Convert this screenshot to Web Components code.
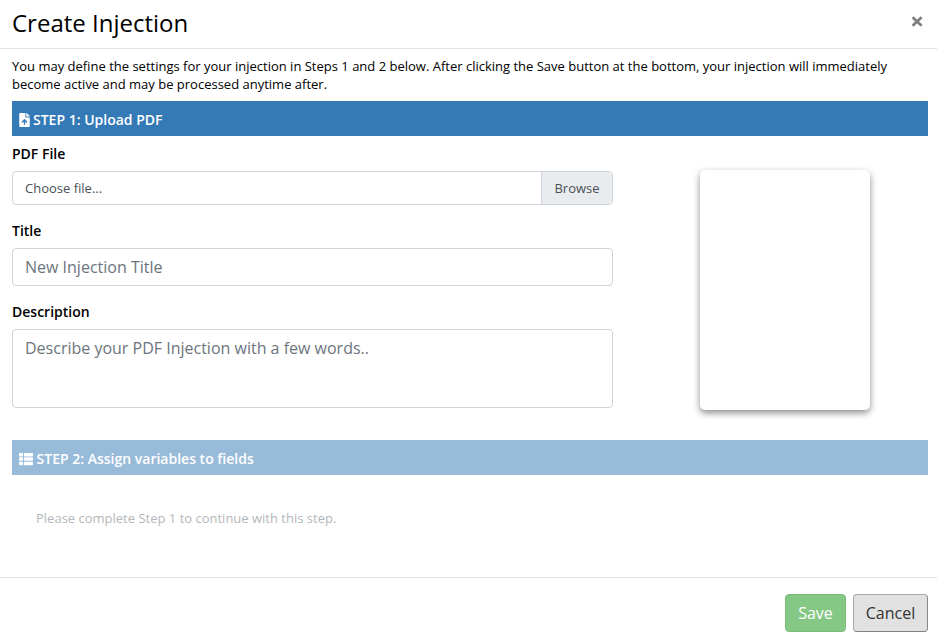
<!DOCTYPE html>
<html lang="en">
<head>
<meta charset="utf-8">
<title>Create Injection</title>
<style>
html,body{margin:0;height:100%;background:#fff;overflow:hidden}
body{font-family:"Open Sans","Noto Sans",sans-serif;color:#000}
</style>
</head>
<body>
<injection-dialog></injection-dialog>

<template id="t-dialog">
<style>
:host{display:flex;flex-direction:column;height:644px;width:937px;box-sizing:border-box}
header{display:flex;justify-content:space-between;box-sizing:border-box;height:49px;padding:7px 14px 0 12px;border-bottom:1px solid #dee2e6}
h1{margin:0;font-size:24px;line-height:32px;font-weight:400}
.x{all:unset;width:12px;height:12px;margin-top:9px}
.x svg{display:block}
main{flex:1;padding:8px 9px 0 12px}
p{margin:0;font-size:13px;line-height:18px}
.intro{margin-bottom:8px;height:36px;padding-top:0}
.grid{display:flex;height:304px}
.fields{width:601px}
.fields form-field+form-field{margin-top:16px}
.note{padding:34px 24px 0;color:#b3b7bb}
footer{display:flex;justify-content:flex-end;gap:7px;box-sizing:border-box;height:67px;padding:16px 9px 0;border-top:1px solid #dee2e6}
</style>
<header><h1>Create Injection</h1>
<button class="x" aria-label="Close"><svg width="12" height="12" viewBox="0 0 12 12"><path d="M1.600 1.300 10.600 9.800M10.600 1.300 1.600 9.800" stroke="#7f7f7f" stroke-width="2.700"/></svg></button></header>
<main>
<p class="intro">You may define the settings for your injection in Steps 1 and 2 below. After clicking the Save button at the bottom, your injection will immediately become active and may be processed anytime after.</p>
<step-bar>
<svg slot="icon" width="11" height="14" viewBox="0 0 384 512"><path fill="#fff" d="M224 136V0H24C10.700 0 0 10.700 0 24v464c0 13.300 10.700 24 24 24h336c13.300 0 24-10.700 24-24V160H248c-13.200 0-24-10.800-24-24zM377 105 279.100 7c-4.500-4.500-10.600-7-17-7H256v128h128v-6.100c0-6.300-2.500-12.400-7-16.900z"/><path fill="none" stroke="#337ab7" stroke-width="50" stroke-linecap="round" stroke-linejoin="round" d="M192 410V248M112 326l80-78 80 78"/></svg>
STEP 1: Upload PDF</step-bar>
<div class="grid">
<div class="fields">
<form-field label="PDF File"><file-picker></file-picker></form-field>
<form-field label="Title"><text-box>New Injection Title</text-box></form-field>
<form-field label="Description"><text-box style="--h:79px">Describe your PDF Injection with a few words..</text-box></form-field>
</div>
<page-preview></page-preview>
</div>
<step-bar faded>
<svg slot="icon" width="14" height="14" viewBox="0 0 512 512"><path fill="#fff" d="M149.300 216v80c0 13.300-10.700 24-24 24H24c-13.300 0-24-10.700-24-24v-80c0-13.300 10.700-24 24-24h101.300c13.300 0 24 10.700 24 24zM0 376v80c0 13.300 10.700 24 24 24h101.300c13.300 0 24-10.700 24-24v-80c0-13.300-10.700-24-24-24H24c-13.300 0-24 10.700-24 24zM125.300 32H24C10.700 32 0 42.700 0 56v80c0 13.300 10.700 24 24 24h101.300c13.300 0 24-10.700 24-24V56c0-13.300-10.700-24-24-24zm80 448H488c13.300 0 24-10.700 24-24v-80c0-13.300-10.700-24-24-24H205.300c-13.300 0-24 10.700-24 24v80c0 13.300 10.700 24 24 24zm-24-424v80c0 13.300 10.700 24 24 24H488c13.300 0 24-10.700 24-24V56c0-13.300-10.700-24-24-24H205.300c-13.300 0-24 10.700-24 24zm24 264H488c13.300 0 24-10.700 24-24v-80c0-13.300-10.700-24-24-24H205.300c-13.300 0-24 10.700-24 24v80c0 13.300 10.700 24 24 24z"/></svg>
STEP 2: Assign variables to fields</step-bar>
<p class="note">Please complete Step 1 to continue with this step.</p>
</main>
<footer><action-button kind="save">Save</action-button><action-button kind="cancel">Cancel</action-button></footer>
</template>

<template id="t-bar">
<style>
:host{display:flex;align-items:center;gap:3px;box-sizing:border-box;height:35px;padding:2px 7px 0;background:#337ab7;color:#fff;font-size:14px;font-weight:600;line-height:20px}
:host([faded]){gap:3.6px;background:#99bbda}
::slotted(svg){display:block;flex:none}
</style>
<slot name="icon"></slot><span><slot></slot></span>
</template>

<template id="t-field">
<style>
:host{display:block}
label{display:block;font-size:14px;line-height:20px;font-weight:600;padding:8px 0 7px}
:host(:not(:first-child)) label{padding:0 0 7px}
</style>
<label></label><slot></slot>
</template>

<template id="t-file">
<style>
:host{display:flex;box-sizing:border-box;height:34px;border:1px solid #ced4da;border-radius:4px;overflow:hidden;font-size:13px;line-height:32px;color:#495057}
.name{flex:1;padding-left:12px}
.browse{box-sizing:border-box;width:71px;text-align:center;background:#e9ecef;border-left:1px solid #ced4da}
</style>
<span class="name">Choose file...</span><span class="browse">Browse</span>
</template>

<template id="t-text">
<style>
:host{display:block;box-sizing:border-box;height:var(--h,38px);padding:6px 12px;border:1px solid #ced4da;border-radius:4px;font-size:16px;line-height:24px;color:#6c757d}
</style>
<slot></slot>
</template>

<template id="t-preview">
<style>
:host{display:block;width:170px;height:240px;margin:34px 0 0 87px;border-radius:5px;background:#fff;box-shadow:0 3px 7px rgba(0,0,0,.45)}
</style>
</template>

<template id="t-button">
<style>
:host{display:block}
button{all:unset;display:block;box-sizing:border-box;height:38px;border:1px solid;border-radius:4px;text-align:center;font-size:16px;line-height:36px}
.save{width:61px;background:#85c785;border-color:#79bd79;color:#fff}
.cancel{width:75px;background:#e1e1e1;border-color:#aaa #888 #808080 #aaa;color:#333}
</style>
<button><slot></slot></button>
</template>

<script>
const define=(name,id,setup)=>customElements.define(name,class extends HTMLElement{
  constructor(){
    super();
    this.attachShadow({mode:"open"}).append(document.getElementById(id).content.cloneNode(true));
  }
  connectedCallback(){ if(setup) setup(this,this.shadowRoot); }
});
define("step-bar","t-bar");
define("form-field","t-field",(el,root)=>{root.querySelector("label").textContent=el.getAttribute("label");});
define("file-picker","t-file");
define("text-box","t-text");
define("page-preview","t-preview");
define("action-button","t-button",(el,root)=>{root.querySelector("button").className=el.getAttribute("kind");});
define("injection-dialog","t-dialog");
</script>
</body>
</html>
